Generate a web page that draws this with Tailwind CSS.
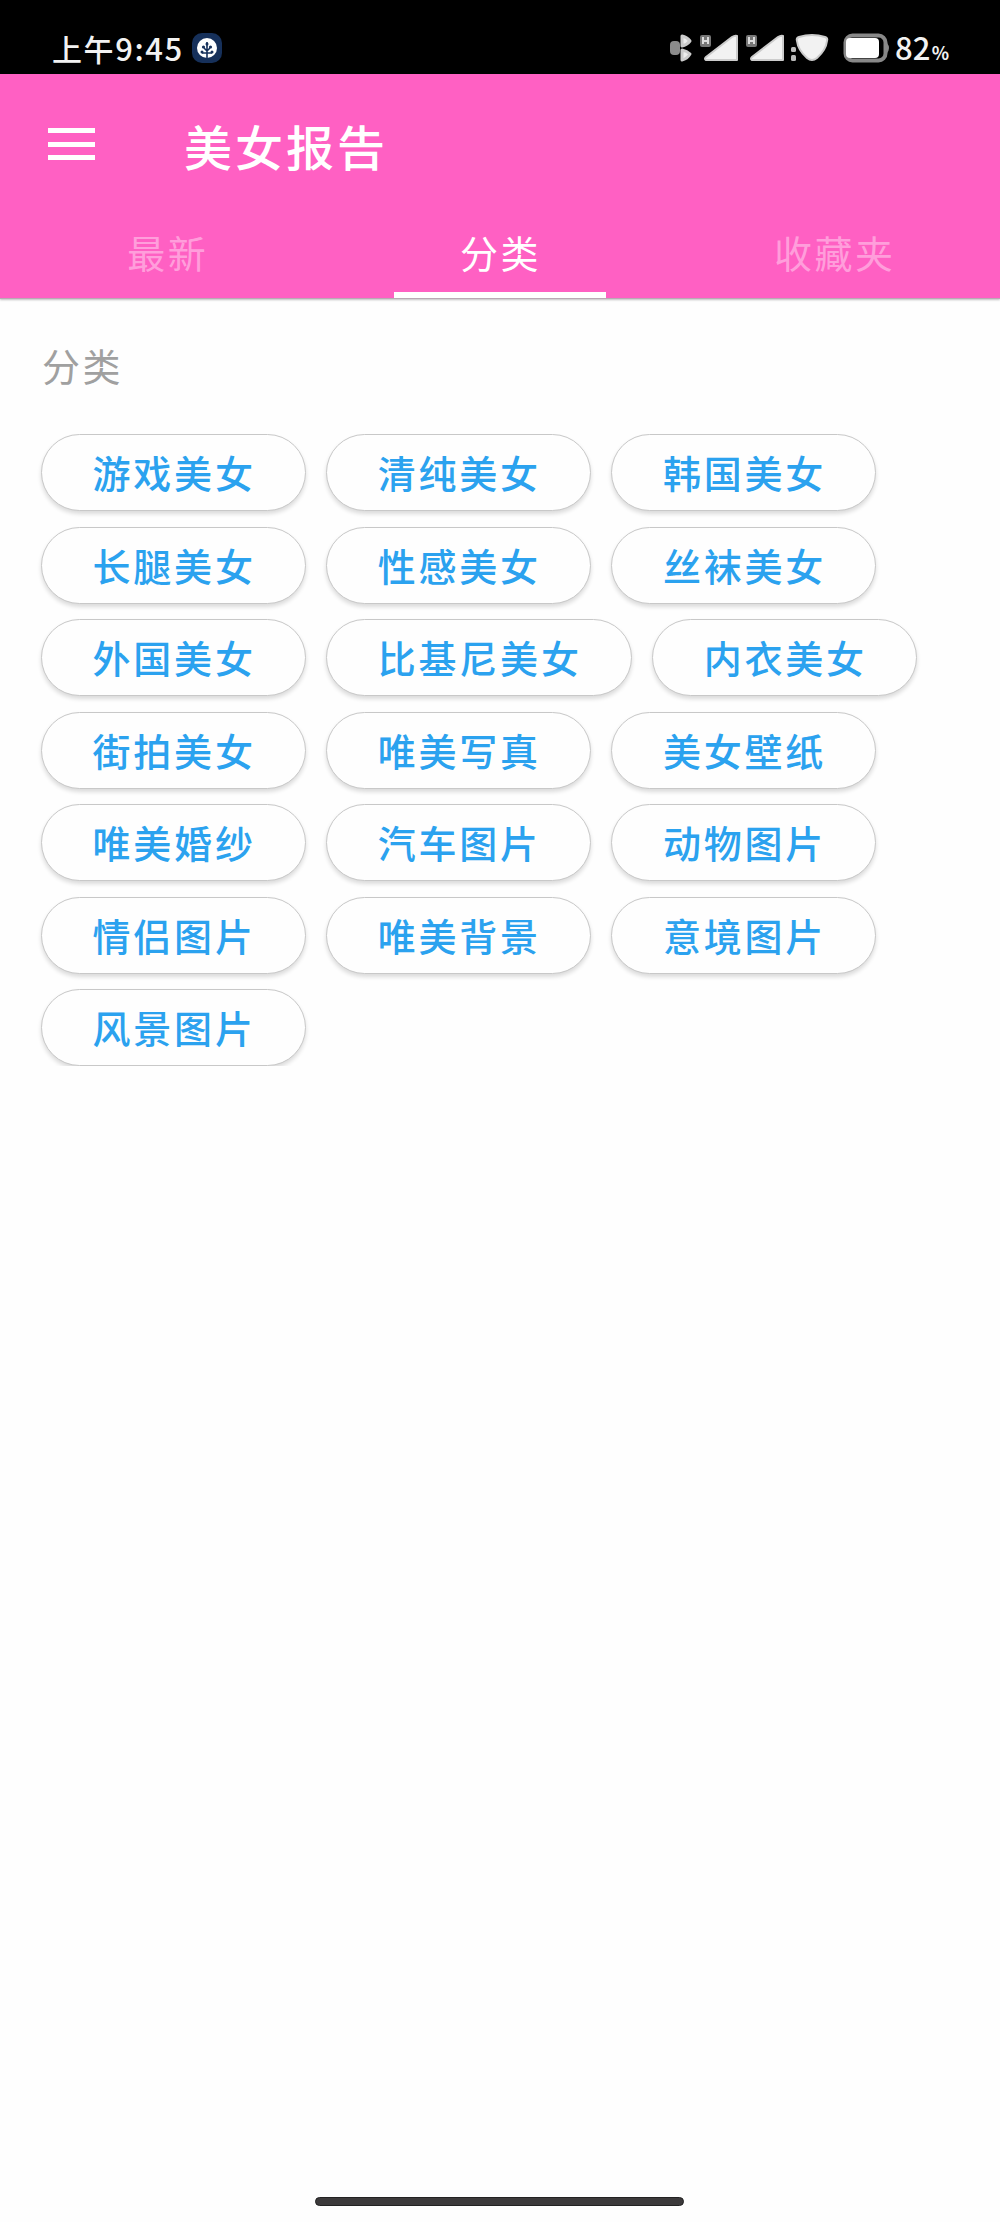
<!DOCTYPE html>
<html lang="zh-CN">
<head>
<meta charset="utf-8">
<title>美女报告</title>
<script src="https://cdn.jsdelivr.net/npm/@tailwindcss/browser@4"></script>
</head>
<body class="flex h-[2222px] w-[1000px] flex-col overflow-hidden bg-[#fefefe] font-['Noto_Sans_CJK_SC',sans-serif]">
<div class="flex h-[74px] shrink-0 items-start justify-between bg-black pl-[52px] pr-[49px] text-[#f2f2f2]">
  <div class="flex items-start">
    <span class="mt-[28px] w-[134px] whitespace-nowrap text-[30px] leading-[40px] tracking-[1.6px] font-medium">上午<span class="text-[31px]">9:45</span></span>
    <svg class="ml-[5px] mt-[32px]" width="32" height="32" viewBox="0 0 32 32"><rect x="1" y="1" width="30" height="30" rx="10" fill="#16305a"/><circle cx="16" cy="16" r="10" fill="#fff"/><path d="M16 10v16M16 19l-3-3M16 19l3-3M16 21h-5M16 21h5" stroke="#16305a" stroke-width="1.6" fill="none"/><g fill="#16305a"><circle cx="16" cy="12" r="1.500"/><circle cx="12.500" cy="15" r="1.600"/><circle cx="19.500" cy="15" r="1.600"/><circle cx="11" cy="20" r="1.500"/><circle cx="21" cy="20" r="1.500"/></g></svg>
  </div>
  <div class="flex items-start">
    <svg class="mt-[30px]" width="224" height="36" viewBox="666 30 224 36">
      <rect x="670" y="41" width="10" height="14" rx="4" fill="#8b8b8b"/>
      <path d="M682 36q5 1 8 5q-3 4-8 5zM682 50q5 1 8 4q-3 5-8 6z" fill="#eee" stroke="#ccc" stroke-width="3" stroke-linejoin="round"/>
      <g id="sig"><rect x="700" y="35" width="11" height="12" rx="2" fill="#777"/><path d="M703 37v7M708 37v7M703 41h5" stroke="#ddd" stroke-width="2"/><path d="M737 36v24h-31q-2-1 0-3L732 37q3-2 5-1z" fill="#f2f2f2" stroke="#ccc" stroke-width="2" stroke-linejoin="round"/></g>
      <use href="#sig" x="46"/>
      <rect x="791" y="47" width="5" height="5" rx="1.500" fill="#bbb"/><rect x="791" y="55" width="5" height="6" rx="1.500" fill="#bbb"/>
      <path d="M799 37q13-4 26 0q3 1 2 4q-1 9-10 17q-5 4-10 0q-9-8-10-17q-1-3 2-4z" fill="#f2f2f2" stroke="#ccc" stroke-width="2"/>
      <rect x="845.500" y="35.500" width="40" height="25" rx="7" fill="none" stroke="#888" stroke-width="4"/>
      <rect x="846" y="38" width="33" height="20" rx="4" fill="#fff"/><path d="M887 43q4 5 0 10z" fill="#888"/>
    </svg>
    <span class="ml-[5px] mt-[27px] w-[56px] whitespace-nowrap text-[31px] leading-[40px] tracking-[0.2px] font-medium">82<span class="ml-[1px] text-[18px] font-bold">%</span></span>
  </div>
</div>
<header class="flex h-[225px] shrink-0 flex-col border-b border-[#b9a9b4] bg-[#ff60c3] text-white shadow-[0_1px_2px_rgba(0,0,0,0.25)]">
  <div class="flex h-[134px] pl-[48px]">
    <div class="mt-[54px] flex w-[47px] flex-col gap-[8.500px]">
      <i class="h-[5px] bg-white"></i><i class="h-[5px] bg-white"></i><i class="h-[5px] bg-white"></i>
    </div>
    <h1 class="ml-[89px] mt-[36px] text-[48px] leading-[70px] tracking-[3px] font-medium">美女报告</h1>
  </div>
  <nav class="grid h-[90px] grid-cols-3 text-center text-[38px] tracking-[2.500px]">
    <div class="pl-[2px] pt-[16px] leading-[56px] text-[#ff9edb]">最新</div>
    <div class="flex flex-col items-center justify-between pt-[16px]"><span class="pl-[1px] leading-[56px]">分类</span><i class="h-[6px] w-[212px] bg-white"></i></div>
    <div class="pl-[3px] pt-[16px] leading-[56px] text-[#ff9edb]">收藏夹</div>
  </nav>
</header>
<main class="flex flex-col">
  <h2 class="mt-[38px] pl-[42px] text-[38px] leading-[56px] tracking-[2.500px] text-[#a0a0a0]">分类</h2>
  <div id="tags" class="mt-[41px] flex h-[632px] flex-col gap-[15.500px] overflow-hidden pl-[40.500px]"></div>
</main>
<div class="mb-[16px] mt-auto h-[9px] w-[369px] shrink-0 -translate-x-px self-center rounded-full border border-[#222] bg-[#3c3a3b]"></div>
<script>
const rows = [
  ['游戏美女','清纯美女','韩国美女'],
  ['长腿美女','性感美女','丝袜美女'],
  ['外国美女','比基尼美女','内衣美女'],
  ['街拍美女','唯美写真','美女壁纸'],
  ['唯美婚纱','汽车图片','动物图片'],
  ['情侣图片','唯美背景','意境图片'],
  ['风景图片']
];
document.getElementById('tags').innerHTML = rows.map(r =>
  '<div class="flex h-[77px] shrink-0 gap-[19.800px]">' + r.map(t =>
    '<button class="h-[77px] whitespace-nowrap rounded-full border border-[#c8c8c8] bg-[#fefefe] pb-[2px] pl-[51px] pr-[49.200px] text-[38px] leading-[73px] tracking-[2.800px] font-medium text-[#2ba2ef] shadow-[0_3px_4px_rgba(0,0,0,0.14)]">' + t + '</button>').join('') +
  '</div>').join('');
</script>
</body>
</html>
